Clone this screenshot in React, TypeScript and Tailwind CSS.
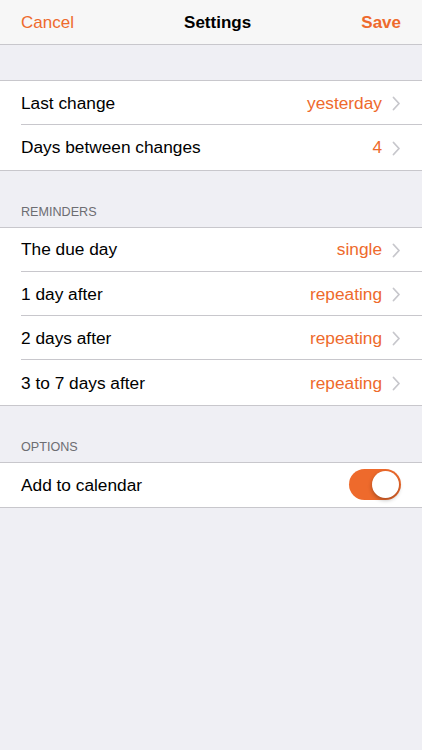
const orange = "text-[#ee6a2c]";

type Row = { label: string; value?: string };

const general: Row[] = [
  { label: "Last change", value: "yesterday" },
  { label: "Days between changes", value: "4" },
];

const reminders: Row[] = [
  { label: "The due day", value: "single" },
  { label: "1 day after", value: "repeating" },
  { label: "2 days after", value: "repeating" },
  { label: "3 to 7 days after", value: "repeating" },
];

function Chevron() {
  return (
    <svg width="9" height="15" viewBox="0 0 9 15" className="ml-[10px] mr-[21px]">
      <path d="M1.5 1.5 L7 7.5 L1.5 13.5" fill="none" stroke="#c7c7cc" strokeWidth="1.8" strokeLinecap="round" strokeLinejoin="round" />
    </svg>
  );
}

function Group({ rows }: Readonly<{ rows: Row[] }>) {
  return (
    <div className="border-y border-[#c8c7cc] bg-white">
      {rows.map((r, i) => (
        <div key={r.label} className="pl-[21px]">
          <div
            className={`flex h-[44.3px] items-center pt-[2px] ${
              i < rows.length - 1 ? "border-b border-[#c8c7cc]" : ""
            }`}
          >
            <span className="flex-1 text-[17.3px] text-black">{r.label}</span>
            <span className={`text-[17.3px] ${orange}`}>{r.value}</span>
            <Chevron />
          </div>
        </div>
      ))}
    </div>
  );
}

function Header({ title }: Readonly<{ title: string }>) {
  return (
    <div className="flex h-[56px] items-end px-[21px] pb-[5px] text-[12.6px] text-[#6d6d72]">
      {title}
    </div>
  );
}

export default function App() {
  return (
    <div
      className="min-h-[750px] bg-[#efeff4]"
      style={{ fontFamily: "'Liberation Sans', Arial, sans-serif" }}
    >
      <div className="flex h-[45px] items-center justify-between border-b border-[#c8c7cc] bg-[#f7f7f7] px-[21px] pt-[2px] text-[17px]">
        <span className={orange}>Cancel</span>
        <span className="font-bold text-black">Settings</span>
        <span className={`font-bold ${orange}`}>Save</span>
      </div>
      <div className="h-[35px]" />
      <Group rows={general} />
      <Header title="REMINDERS" />
      <Group rows={reminders} />
      <Header title="OPTIONS" />
      <div className="border-y border-[#c8c7cc] bg-white pl-[21px]">
        <div className="flex h-[44.3px] items-center pr-[21px]">
          <span className="flex-1 pt-[2px] text-[17.3px] text-black">Add to calendar</span>
          <div className="flex h-[31px] w-[52px] items-center justify-end rounded-full bg-[#ee6a2c] p-[2px]">
            <div className="h-[27px] w-[27px] rounded-full bg-white shadow-[0_2px_4px_rgba(0,0,0,0.3)]" />
          </div>
        </div>
      </div>
    </div>
  );
}
